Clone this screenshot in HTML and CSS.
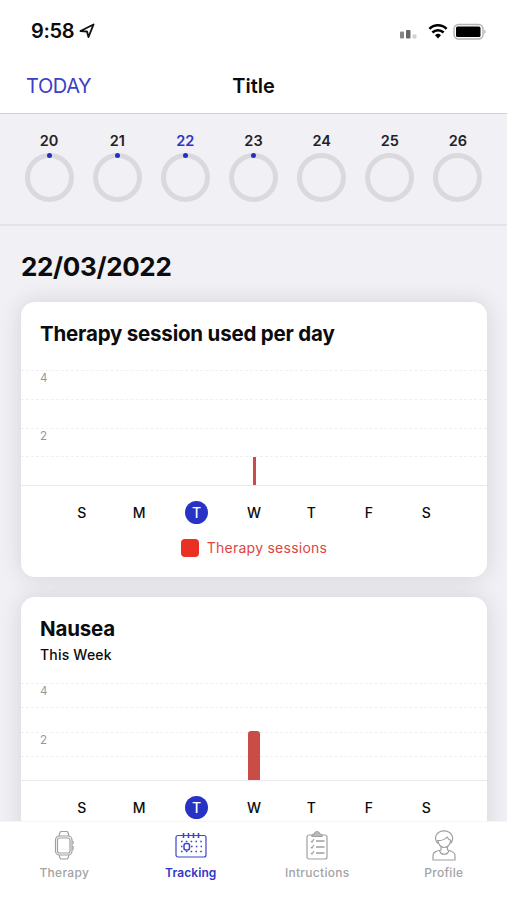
FILE: index.html
```html
<!DOCTYPE html>
<html lang="en">
    <head>
        <meta charset="utf-8">
        <title>Tracking</title>
        <link rel="stylesheet" href="styles.css">
    </head>
    <body>
    <div class="app">
        <div class="status">
            <span class="time">9:58</span>
            <svg class="arrow" width="16" height="16" viewBox="0 0 16 16"><path d="M14.500 1.500L9.500 14 8 8.500 1.500 8z" fill="none" stroke="#111" stroke-width="1.900" stroke-linejoin="round"/></svg>
            <svg class="signals" width="90" height="20" viewBox="0 0 90 20">
                <rect x="3" y="10.500" width="4" height="7" rx="1" fill="#858585"/>
                <rect x="9" y="9" width="4.500" height="8.500" rx="1" fill="#666"/>
                <rect x="15.500" y="13.500" width="4" height="4" rx="1" fill="#d0d0d0"/>
                <g fill="none" stroke="#000" stroke-width="2.600">
                    <path d="M32.400 7.800a12.200 12.200 0 0 1 17.200 0"/>
                    <path d="M35.400 11.500a8 8 0 0 1 11.200 0"/>
                </g>
                <path d="M38 14.200a4.400 4.400 0 0 1 6 0L41 17.400z"/>
                <rect x="57" y="3.500" width="29" height="14.500" rx="4.500" fill="#fff" stroke="#b3b3b3" stroke-width="1.400"/>
                <rect x="59" y="5.500" width="24.500" height="10.500" rx="1.500"/>
                <path d="M87.500 8.500q2 2.200 0 4.500z" fill="#999"/>
            </svg>
        </div>
        <div class="nav">
            <span class="today">TODAY</span>
            <span class="title">Title</span>
        </div>
        <div class="week">
            <div class="day"><span>20</span><i class="ring dot"></i></div>
            <div class="day"><span>21</span><i class="ring dot"></i></div>
            <div class="day active"><span>22</span><i class="ring dot"></i></div>
            <div class="day"><span>23</span><i class="ring dot"></i></div>
            <div class="day"><span>24</span><i class="ring"></i></div>
            <div class="day"><span>25</span><i class="ring"></i></div>
            <div class="day"><span>26</span><i class="ring"></i></div>
        </div>
        <div class="content">
            <h1>22/03/2022</h1>
            <div class="card sessions">
                <h2>Therapy session used per day</h2>
                <div class="chart">
                    <div class="line"><span>4</span></div>
                    <div class="line"></div>
                    <div class="line"><span>2</span></div>
                    <div class="line last"><i class="bar thin"></i></div>
                </div>
                <div class="labels">
                    <span>S</span><span>M</span><span><b>T</b></span><span>W</span><span>T</span><span>F</span><span>S</span>
                </div>
                <div class="legend"><i></i><span>Therapy sessions</span></div>
            </div>
            <div class="card nausea">
                <h2>Nausea</h2>
                <p>This Week</p>
                <div class="chart">
                    <div class="line"><span>4</span></div>
                    <div class="line"></div>
                    <div class="line"><span>2</span></div>
                    <div class="line last"><i class="bar"></i></div>
                </div>
                <div class="labels">
                    <span>S</span><span>M</span><span><b>T</b></span><span>W</span><span>T</span><span>F</span><span>S</span>
                </div>
            </div>
        </div>
        <div class="tabs">
            <div class="tab">
                <svg width="34" height="32" viewBox="0 0 34 32">
                    <rect x="8.500" y="6" width="16.500" height="19" rx="4"/>
                    <rect x="10.500" y="8" width="12.500" height="15" rx="2"/>
                    <path d="M12 6l1-3.500q.300-1 1.500-1h5q1.200 0 1.500 1L22 6M12 25l1 3q.300 1 1.500 1h5q1.200 0 1.500-1l1-3M26 11v3M26 16v4"/>
                </svg>
                <span>Therapy</span>
            </div>
            <div class="tab on">
                <svg width="34" height="32" viewBox="0 0 34 32">
                    <rect x="2" y="5.500" width="30" height="21.500" rx="2"/>
                    <path d="M9.500 3v5M14.500 3v5M19.500 3v5M24.500 3v5" stroke-width="1.600"/>
                    <path d="M7 11.500h21M17 16.500h11M7 16.500h1.500M7 21.500h21" stroke-width="1.600" stroke-dasharray="1.600 3.200"/>
                    <rect x="10" y="13.500" width="5.500" height="6.500" rx="2" stroke-width="1.500"/>
                </svg>
                <span>Tracking</span>
            </div>
            <div class="tab">
                <svg width="34" height="32" viewBox="0 0 34 32">
                    <rect x="7" y="5" width="20" height="24" rx="2"/>
                    <path d="M12 6.500V5q0-1 2-1 1-2.500 3-2.500T20 4q2 0 2 1v1.500z" fill="#bbb"/>
                    <path d="M11 11l1 1 2-3M11 17l1 1 2-3M11 23l1 1 2-3"/>
                    <path d="M16 11h8.500M16 17h8.500M16 23h8.500" stroke-width="1.500"/>
                </svg>
                <span>Intructions</span>
            </div>
            <div class="tab">
                <svg width="34" height="32" viewBox="0 0 34 32">
                    <path d="M11 13.500C5.500 8 10 .800 17 .800S28.500 8 23.500 13.500"/>
                    <path d="M10 10.500c5 .500 8-1 10-3.500 1 2 2 3 4.500 3.500M11 10.500c0 4 3 7 6.300 7s6.200-3 6.200-7"/>
                    <path d="M14 17v3c-5 1-8 2-8 5.500V30h22v-4.500c0-3.500-3-4.500-7.500-5.500v-3M12.500 20.500c1.500 5 8 5 9.500 0"/>
                </svg>
                <span>Profile</span>
            </div>
        </div>
    </div>
    </body>
</html>
```
FILE: styles.css
```css
body{
    margin:0;
    font-family: Inter, "Liberation Sans", sans-serif;
    color:#0c0c0e;
}
h1,h2,p{margin:0;}
.app{
    width:507px;
    height:900px;
    display:flex;
    flex-direction:column;
    overflow:hidden;
    background-color:#f0f0f5;
}
.status{
    height:62px;
    flex:none;
    box-sizing:border-box;
    padding:0 20px 0 31px;
    display:flex;
    align-items:center;
    background-color:#fff;
}
.time{font-size:20px;font-weight:600;letter-spacing:-0.3px;}
.arrow{margin-left:5px;}
.signals{margin-left:auto;}
.nav{
    height:51px;
    flex:none;
    display:grid;
    grid-template-columns:1fr auto 1fr;
    align-items:center;
    line-height:48px;
    align-content:start;
    font-size:20px;
    background-color:#fff;
    border-bottom:1px solid #cfcfd2;
}
.today{padding-left:26px;color:#3a41c4;letter-spacing:-0.4px;}
.title{font-weight:600;}
.week{
    height:112px;
    flex:none;
    box-sizing:border-box;
    padding:18px 15px 0;
    display:flex;
    border-bottom:2px solid #e4e4e8;
}
.day{
    flex:1;
    display:flex;
    flex-direction:column;
    align-items:center;
    font-size:14.5px;
    line-height:18px;
    font-weight:600;
    color:#222226;
}
.active{color:#2c36c4;}
.ring{
    position:relative;
    width:39px;
    height:39px;
    margin-top:3px;
    border:5px solid #dadade;
    border-radius:50%;
}
.dot:before{
    content:"";
    position:absolute;
    left:17px;
    top:-5px;
    width:5px;
    height:5px;
    border-radius:50%;
    background-color:#2330c3;
}
.content{
    flex:1;
    min-height:0;
    overflow:hidden;
    padding:24px 20px 0 21px;
}
h1{
    font-size:26px;
    line-height:34px;
    font-weight:700;
    letter-spacing:-0.35px;
}
.card{
    height:275px;
    border-radius:14px;
    background-color:#fff;
    box-shadow:0 0 22px rgba(40,40,50,0.14);
    overflow:hidden;
}
.sessions{margin-top:18px;}
.nausea{margin-top:20px;}
h2{
    padding:19px 20px 0 19px;
    font-size:20.5px;
    line-height:26px;
    font-weight:650;
    letter-spacing:-0.2px;
}
.card p{
    padding:4px 20px 0 19px;
    font-size:14px;
    line-height:18px;
    font-weight:500;
    letter-spacing:0.2px;
}
.chart{
    height:115px;
    margin-top:23px;
    display:flex;
    flex-direction:column;
    border-bottom:1px solid #e9e9ec;
}
.nausea .chart{height:97px;margin-top:19px;}
.line{
    flex:1;
    position:relative;
    box-sizing:border-box;
    padding-left:19px;
    border-top:1px dashed #f0f0f2;
    font-size:11.5px;
    line-height:15px;
    color:#97979c;
}
.bar{
    position:absolute;
    left:227px;
    bottom:0;
    width:12px;
    height:49px;
    border-radius:3px 3px 0 0;
    background-color:#c94c46;
}
.thin{left:232px;width:2.5px;height:28px;border-radius:0;}
.labels{
    height:23px;
    margin-top:15px;
    padding:0 32px;
    display:flex;
}
.labels span{
    flex:1;
    display:flex;
    justify-content:center;
    font-size:14px;
    line-height:23px;
    font-weight:500;
}
.labels b{
    width:23px;
    height:23px;
    border-radius:50%;
    text-align:center;
    font-weight:500;
    color:#fff;
    background-color:#2633c5;
}
.legend{
    margin-top:14px;
    display:flex;
    justify-content:center;
    align-items:center;
    font-size:14px;
    line-height:20px;
    letter-spacing:0.25px;
    color:#e0453e;
}
.legend i{
    width:18px;
    height:18px;
    margin-right:8px;
    border-radius:4px;
    background-color:#ea3023;
}
.tabs{
    height:79px;
    flex:none;
    box-sizing:border-box;
    padding:8px 0 0 1px;
    display:flex;
    background-color:#fff;
    border-top:1px solid #f5f5fa;
}
.tab{
    flex:1;
    display:flex;
    flex-direction:column;
    align-items:center;
    font-size:12px;
    line-height:16px;
    font-weight:500;
    letter-spacing:0.3px;
    color:#a3a3a5;
}
.tab svg{fill:none;stroke:#a0a0a2;stroke-width:1.2;stroke-linejoin:round;}
.tab span{margin-top:3px;}
.on{color:#2e38c6;font-weight:600;letter-spacing:0.1px;}
.tab.on svg{stroke:#3b45c8;}
```
